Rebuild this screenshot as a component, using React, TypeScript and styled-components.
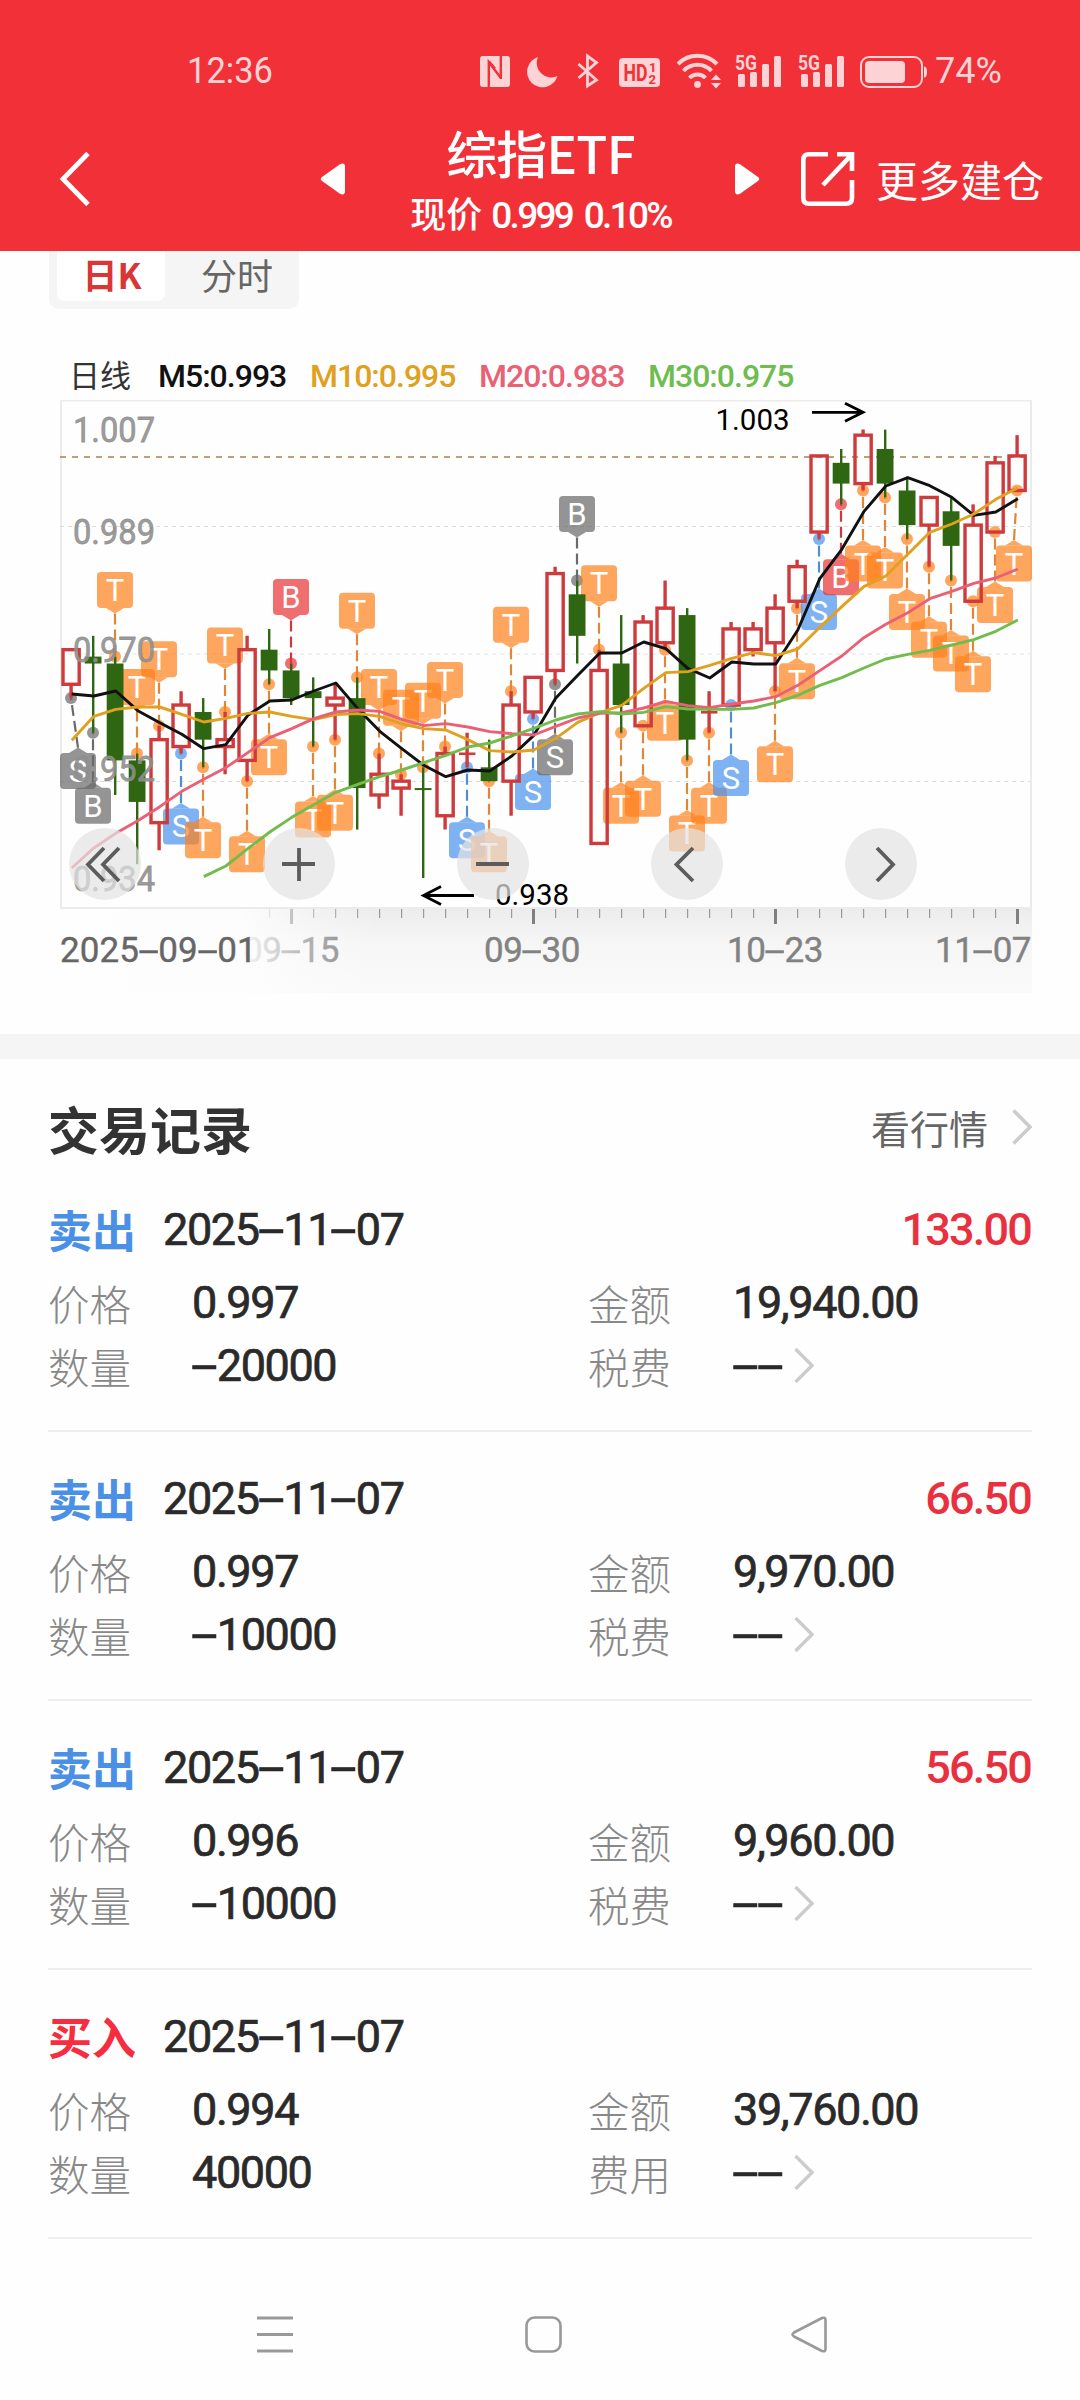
import React from 'react';
import styled, { createGlobalStyle } from 'styled-components';

const cjk = `"Noto Sans CJK SC", sans-serif`;
const digits = `Roboto, "Noto Sans CJK SC", sans-serif`;

const GlobalStyle = createGlobalStyle`
  * { box-sizing: border-box; }
  body { margin: 0; background: #fefefe; font-family: ${cjk}; }
  svg { display: block; flex: none; }
`;

const Screen = styled.div`
  width: 1080px;
  height: 2400px;
  display: flex;
  flex-direction: column;
  overflow: hidden;
  background: #fefefe;
`;

/* ---------- header ---------- */

const Header = styled.header`
  height: 251px;
  flex: none;
  background: #f23038;
  color: #fff;
`;

const StatusBar = styled.div`
  height: 107px;
  padding: 35px 0 0 187px;
  display: flex;
  align-items: center;
  color: #fdd3d5;
  font: 400 37.5px/1 ${digits};
`;

const StatusText = styled.span<{ $w: number; $sx: number }>`
  width: ${p => p.$w}px;
  white-space: nowrap;
  transform: scaleX(${p => p.$sx});
  transform-origin: left;
`;

const StatusIcon = styled.svg<{ $gap: number }>`
  height: 36px;
  margin-left: ${p => p.$gap}px;
`;

const TitleBar = styled.div`
  height: 144px;
  display: flex;
  align-items: center;
  padding-left: 58px;
`;

const TitleBlock = styled.div`
  width: 389px;
  padding-top: 3px;
  display: flex;
  flex-direction: column;
  align-items: center;
`;

const Title = styled.h1`
  margin: 0 0 7px;
  font: 500 51px/60px ${cjk};
  letter-spacing: -0.8px;
`;

const Quote = styled.div`
  display: flex;
  align-items: baseline;
  gap: 9px;
  font: 500 36px/46px ${cjk};
`;

const QuoteNumber = styled.span`
  font: 500 37px/46px ${digits};
  letter-spacing: -2.7px;
  word-spacing: 5px;
`;

const MoreLink = styled.span`
  margin: -1px 0 0 20px;
  font: 400 42px/60px ${cjk};
`;

const Spacer = styled.div<{ $w: number }>`
  width: ${p => p.$w}px;
  flex: none;
`;

/* ---------- chart ---------- */

const ChartSection = styled.section`
  height: 783px;
  flex: none;
  padding: 0 48px;
`;

const Tabs = styled.div`
  width: 250px;
  height: 58px;
  margin-left: 1px;
  padding: 0 8px 8px;
  display: flex;
  background: #f5f5f5;
  border-radius: 0 0 10px 10px;
`;

const Tab = styled.div<{ $active?: boolean }>`
  width: ${p => (p.$active ? 108 : 142)}px;
  flex: none;
  height: 50px;
  display: flex;
  justify-content: center;
  padding-left: 2px;
  border-radius: 0 0 8px 8px;
  background: ${p => (p.$active ? '#fff' : 'transparent')};
  color: ${p => (p.$active ? '#d93636' : '#666')};
  font: ${p => (p.$active ? '700 35px' : '400 36px')}/46px ${cjk};
`;

const Legend = styled.div`
  height: 50px;
  margin: 40px 0 1px 21px;
  display: flex;
  align-items: baseline;
  color: #333;
  font: 400 31px/50px ${cjk};
`;

const LegendItem = styled.span<{ $color: string; $w: number }>`
  width: ${p => p.$w}px;
  color: ${p => p.$color};
  font: 500 32px/50px ${digits};
  letter-spacing: -1px;
  white-space: nowrap;
`;

const ChartArea = styled.div`
  position: relative;
  width: 984px;
`;

const ChartControl = styled.button<{ $x: number }>`
  position: absolute;
  left: ${p => p.$x - 36 - 48}px;
  top: 428px;
  width: 72px;
  height: 72px;
  padding: 0;
  border: 0;
  border-radius: 50%;
  background: rgba(227, 227, 227, 0.71);
`;

const Axis = styled.div`
  position: relative;
  width: 972px;
  height: 84px;
  margin-left: 12px;
  background: linear-gradient(#ececec, #f6f6f6 40%, #fafafa);
`;

const AxisFade = styled.div`
  position: absolute;
  inset: 0;
  background: linear-gradient(to right, #fefefe 0, rgba(253, 253, 253, 0.97) 180px, rgba(253, 253, 253, 0.3) 260px, rgba(253, 253, 253, 0) 320px);
`;

const AxisLabel = styled.div<{ $left?: number; $right?: number; $dark?: boolean }>`
  position: absolute;
  top: 19px;
  ${p => (p.$right !== undefined ? `right: ${p.$right}px` : `left: ${p.$left}px`)};
  color: ${p => (p.$dark ? '#666' : '#828282')};
  font: 400 35px/46px ${digits};
  letter-spacing: ${p => (p.$dark ? 0.1 : -0.5)}px;
  -webkit-text-stroke: 0.4px currentColor;
  white-space: nowrap;
`;

const AxisTicks = styled.svg`
  position: absolute;
  left: 0;
  top: 0;
`;

const Divider = styled.div`
  height: 25px;
  flex: none;
  background: #f5f5f5;
`;

/* ---------- records ---------- */

const Records = styled.section`
  padding: 0 48px;
`;

const SectionHead = styled.div`
  height: 104px;
  padding-top: 35px;
  display: flex;
  align-items: center;
  justify-content: space-between;
`;

const SectionTitle = styled.h2`
  margin: -2px 0 0;
  color: #333;
  font: 700 51px/60px ${cjk};
`;

const SectionLink = styled.div`
  display: flex;
  align-items: center;
  gap: 24px;
  margin-top: -3px;
  color: #666;
  font: 400 39px/60px ${cjk};
`;

const Record = styled.article`
  height: 269px;
  padding-top: 33px;
  border-bottom: 2px solid #eee;
`;

const RecordHead = styled.div`
  height: 74px;
  display: flex;
  align-items: baseline;
`;

const Side = styled.span<{ $buy?: boolean }>`
  width: 115px;
  color: ${p => (p.$buy ? '#f52d3e' : '#4a90e6')};
  font: 700 44px/60px ${cjk};
  transform: translateY(3px);
`;

const Figure = styled.span<{ $red?: boolean }>`
  color: ${p => (p.$red ? '#e9303e' : '#2a2a2a')};
  font: ${p => (p.$red ? 500 : 400)} 45px/60px ${digits};
  letter-spacing: ${p => (p.$red ? -1.8 : -1.4)}px;
  -webkit-text-stroke: ${p => (p.$red ? 0 : 0.7)}px #2a2a2a;
  white-space: nowrap;
`;

const Profit = styled(Figure)`
  margin: 0 1px 0 auto;
`;

const Fields = styled.div`
  display: grid;
  grid-template-columns: 144px 396px 145px 1fr;
  grid-auto-rows: 63px;
  align-items: baseline;
`;

const FieldName = styled.span`
  color: #888;
  font: 300 41.5px/60px ${cjk};
  transform: translateY(3px);
`;

const FeeValue = styled.div`
  display: flex;
  align-items: baseline;
  gap: 11px;

  svg {
    transform: translateY(2.5px);
  }
`;

const DashGlyph = styled.span`
  display: inline-block;
  width: 0.55em;
  text-align: center;
  letter-spacing: 0;
  transform: scaleX(2.1);
`;

/* ---------- system navigation ---------- */

const NavBar = styled.nav`
  height: 132px;
  margin-top: auto;
  display: flex;
  align-items: center;
  padding-left: 257px;
`;

/** Numerals with the wide hyphen used all over the app. */
const Num = ({ children }: { children: string }) => (
  <>
    {children.split(/(-)/).map((part, i) => (part === '-' ? <DashGlyph key={i}>-</DashGlyph> : part))}
  </>
);

const Chevron = () => (
  <svg width="20" height="36" viewBox="0 0 20 36" fill="none" stroke="#ccc" strokeWidth="3.4">
    <path d="M1.5 1.5L18 18L1.5 34.5" />
  </svg>
);

const Signal = ({ gap }: { gap: number }) => (
  <StatusIcon $gap={gap} width="46" viewBox="0 0 46 36" fill="currentColor">
    <text x="0" y="16.5" fontFamily="Roboto" fontWeight="700" fontSize="21" textLength="22" lengthAdjust="spacingAndGlyphs">5G</text>
    <rect x="3" y="21" width="7" height="13" rx="1.5" />
    <rect x="15" y="19" width="7" height="15" rx="1.5" />
    <rect x="27" y="11" width="7" height="23" rx="1.5" />
    <rect x="39" y="3" width="7" height="31" rx="1.5" />
  </StatusIcon>
);

/* Each candle: [up day, high, body top, body bottom, low], in thousandths of a yuan. */
type Candle = [boolean, number, number, number, number];
const R = true;
const G = false;
const candles: Candle[] = [
  [R, 971, 971, 966, 964], [G, 973, 970, 969, 959], [G, 970, 969, 955, 950], [G, 956, 955, 949, 940],
  [R, 960, 958, 946, 942], [R, 965, 963, 957, 956], [G, 964, 962, 958, 954], [R, 962, 958, 957, 953],
  [R, 973, 971, 955, 952], [G, 974, 971, 968, 966], [G, 969, 968, 964, 963], [G, 967, 965, 964, 957],
  [R, 966, 964, 963, 958], [G, 967, 964, 951, 945], [R, 956, 953, 950, 948], [R, 953, 952, 951, 947],
  [G, 954, 951, 951, 938], [R, 957, 956, 947, 945], [R, 959, 956, 956, 954], [G, 958, 954, 952, 952],
  [R, 965, 963, 952, 947], [R, 967, 967, 962, 961], [R, 983, 982, 968, 966], [G, 981, 979, 973, 969],
  [R, 971, 968, 943, 943], [G, 976, 969, 963, 959], [R, 976, 975, 960, 960], [R, 981, 977, 972, 971],
  [G, 977, 976, 958, 955], [R, 965, 962, 962, 959], [R, 975, 974, 963, 963], [R, 975, 974, 971, 970],
  [R, 979, 977, 972, 965], [R, 984, 983, 978, 977], [R, 999, 999, 988, 987], [G, 1000, 998, 995, 992],
  [R, 1002.8, 1002, 995, 994], [G, 1002.8, 1000, 995, 993], [G, 996, 994, 989, 987], [R, 993, 993, 989, 983],
  [G, 993, 991, 986, 981], [R, 992, 989, 978, 978], [R, 999, 998, 988, 988], [R, 1002, 999, 994, 994],
];

/* Moving averages, in thirds of a pixel from the top of the drawing. */
const averages = [
  { color: '#111', from: 0, data: [1062, 1068, 1053, 1112, 1148, 1183, 1226, 1214, 1126, 1083, 1080, 1053, 1029, 1106, 1174, 1226, 1276, 1310, 1290, 1293, 1248, 1186, 1074, 1006, 939, 939, 906, 926, 985, 1014, 966, 972, 972, 870, 716, 628, 515, 438, 413, 437, 472, 526, 516, 476] },
  { color: '#e0a020', from: 0, data: [1201, 1129, 1108, 1101, 1101, 1123, 1146, 1135, 1120, 1116, 1129, 1139, 1124, 1121, 1129, 1152, 1166, 1170, 1199, 1232, 1236, 1230, 1195, 1147, 1118, 1096, 1045, 998, 995, 976, 955, 938, 947, 927, 862, 800, 740, 708, 643, 577, 552, 522, 478, 443] },
  { color: '#ea6075', from: 0, data: [1584, 1524, 1480, 1442, 1400, 1354, 1318, 1283, 1238, 1193, 1166, 1136, 1116, 1110, 1114, 1138, 1157, 1151, 1161, 1175, 1181, 1185, 1159, 1134, 1120, 1118, 1104, 1084, 1097, 1103, 1092, 1083, 1070, 1036, 992, 948, 893, 853, 818, 776, 754, 730, 714, 687] },
  { color: '#72bb4c', from: 6, data: [1610, 1578, 1526, 1476, 1432, 1394, 1357, 1333, 1310, 1290, 1268, 1246, 1221, 1209, 1188, 1165, 1140, 1122, 1115, 1122, 1117, 1100, 1107, 1108, 1108, 1104, 1088, 1066, 1036, 1013, 984, 957, 943, 931, 915, 899, 874, 840] },
];

const tones = {
  orange: { fill: 'rgba(255,128,25,.7)', line: '#e08638' },
  red: { fill: 'rgba(232,50,52,.7)', line: '#cc3a3e' },
  blue: { fill: 'rgba(72,145,236,.7)', line: '#4f8fd0' },
  grey: { fill: 'rgba(103,103,103,.7)', line: '#6a6a6a' },
};

/* Trade marks: candle index, letter, tone, and whether the mark hangs above the candle. */
type Mark = [number, string, keyof typeof tones, boolean];
const T = (i: number, above = false): Mark => [i, 'T', 'orange', above];
const marks: Mark[] = [
  [0, 'S', 'grey', false], [1, 'B', 'grey', false], T(2, true), T(3, true), T(4, true), [5, 'S', 'blue', false],
  T(6), T(7, true), T(8), T(9), [10, 'B', 'red', true], T(11), T(12), T(13, true), T(14, true), T(15, true),
  T(16, true), T(17, true), [18, 'S', 'blue', false], T(19), T(20, true), [21, 'S', 'blue', false],
  [22, 'S', 'grey', false], [23, 'B', 'grey', true], T(24, true), T(25), T(26), T(27), T(28), T(29),
  [30, 'S', 'blue', false], T(32), T(33), [34, 'S', 'blue', false], [35, 'B', 'red', false], T(36), T(37),
  T(38), T(39), T(40), T(41), T(42), T(43),
];

const cx = (i: number) => 71 + 22 * i;
const py = (price: number) => 109 + (1000 - price) * 6.92;

const CandleShape = ({ i }: { i: number }) => {
  const [up, high, top, bottom, low] = candles[i];
  const x = cx(i);
  const color = up ? '#cf3b3c' : '#2e6611';
  if (!up) {
    return (
      <g fill={color}>
        <rect x={x - 1} y={py(high)} width="2.4" height={py(low) - py(high)} />
        <rect x={x - 8.3} y={py(top)} width="16.8" height={Math.max(2, py(bottom) - py(top))} />
      </g>
    );
  }
  if (top === bottom) {
    return (
      <g fill={color}>
        <rect x={x - 1.6} y={py(high)} width="3.4" height={py(low) - py(high)} />
        <rect x={x - 8} y={py(top) - 1} width="16.4" height="2.6" />
      </g>
    );
  }
  return (
    <g stroke={color} fill="none" strokeWidth="3.4">
      <path d={`M${x + 0.1} ${py(high)}V${py(top)}M${x + 0.1} ${py(bottom)}V${py(low)}`} />
      <rect x={x - 8} y={py(top)} width="16.2" height={py(bottom) - py(top)} />
    </g>
  );
};

const MarkShape = ({ mark: [i, letter, tone, above] }: { mark: Mark }) => {
  const { fill, line } = tones[tone];
  const dot = py(above ? candles[i][1] : candles[i][4]);
  const x = Math.min(1014, Math.max(78, cx(i)));
  const top = above ? dot - 84.5 : dot + 55;
  const tip = above ? top + 41.5 : top - 5.5;
  const edge = above ? top + 36 : top;
  return (
    <g>
      <path d={`M${x} ${tip}L${cx(i)} ${dot}`} stroke={line} strokeWidth="2.2" strokeDasharray="11 5" />
      <circle cx={cx(i)} cy={dot} r="6" fill={fill} />
      <path d={`M${x - 9} ${edge}L${x} ${tip}L${x + 9} ${edge}Z`} fill={fill} />
      <rect x={x - 18} y={top} width="36" height="36" rx="4" fill={fill} />
      <text x={x} y={top + 29} textAnchor="middle" fill="#fff" fontFamily="Roboto" fontSize="31">{letter}</text>
    </g>
  );
};

const priceLabels: [string, number][] = [
  ['1.007', 101.5], ['0.989', 203.7], ['0.970', 321.7], ['0.952', 440.8], ['0.934', 550.6],
];

const KLine = () => (
  <svg width="984" height="509" viewBox="48 60 984 509">
    <rect x="61" y="60.5" width="970" height="507.5" fill="none" stroke="#ebebeb" strokeWidth="2" />
    <path d="M60 186.5H1030M60 441.5H1030" stroke="#dcdcdc" strokeDasharray="4 4" />
    <path d="M60 314H1030" stroke="#ebebeb" strokeWidth="1.6" strokeDasharray="4 4" />
    <path d="M60 117H1030" stroke="#bf9f76" strokeWidth="2" strokeDasharray="6 6" />
    {marks.map(m => <MarkShape key={m[0]} mark={m} />)}
    {candles.map((_, i) => <CandleShape key={i} i={i} />)}
    <g fill="#8f8f8f" fillOpacity="0.9" stroke="#8f8f8f" strokeWidth="0.8" strokeOpacity="0.9" fontFamily="Roboto" fontSize="35.5">
      {priceLabels.map(([label, y]) => (
        <text key={label} x="73" y={y} textLength="82" lengthAdjust="spacingAndGlyphs">{label}</text>
      ))}
    </g>
    {averages.map(a => (
      <polyline key={a.color} fill="none" stroke={a.color} strokeWidth="2.9" strokeLinejoin="round"
        points={a.data.map((v, k) => `${cx(a.from + k) + 0.8},${v / 3}`).join(' ')} />
    ))}
    <g stroke="#000" strokeWidth="2.8" fill="none">
      <path d="M812 72.3H863M845 63.3L863 72.3L845 81.3" />
      <path d="M474 555.5H424M441 546.5L423.5 555.5L441 564.5" />
    </g>
    <g fontFamily="Roboto" fontSize="29.5" fill="#000">
      <text x="715.5" y="89.8">1.003</text>
      <text x="495" y="564.7">0.938</text>
    </g>
  </svg>
);

const controls: [string, number, string][] = [
  ['oldest', 105, 'M35 20L19 36.5L35 53M50 20L34 36.5L50 53'],
  ['zoom in', 299, 'M19 36H52M36 20V53'],
  ['zoom out', 493, 'M19 36H52'],
  ['earlier', 687, 'M42 20L25.5 36.5L42 53'],
  ['later', 881, 'M32 20L48 36.5L32 53'],
];

const records = [
  { date: '2025-11-07', profit: '133.00', price: '0.997', amount: '19,940.00', qty: '-20000' },
  { date: '2025-11-07', profit: '66.50', price: '0.997', amount: '9,970.00', qty: '-10000' },
  { date: '2025-11-07', profit: '56.50', price: '0.996', amount: '9,960.00', qty: '-10000' },
  { buy: true, date: '2025-11-07', profit: '', price: '0.994', amount: '39,760.00', qty: '40000' },
];

export default function App() {
  return (
    <Screen>
      <GlobalStyle />
      <Header>
        <StatusBar>
          <StatusText $w={293} $sx={0.92}>12:36</StatusText>
          <StatusIcon $gap={0} width="30" viewBox="0 0 30 36">
            <rect x="0" y="3" width="30" height="31" rx="3" fill="currentColor" />
            <path d="M8.8 34V9L20.5 24.5" fill="none" stroke="#f23038" strokeWidth="2.4" />
            <path d="M9 8.500L15 15.5M20.8 3V26" fill="none" stroke="#f23038" strokeWidth="2.4" />
          </StatusIcon>
          <StatusIcon $gap={17} width="31" viewBox="0 0 31 36" fill="currentColor">
            <path d="M11 4A15.5 15.5 0 1 0 30.5 23A14.5 14.5 0 0 1 11 4Z" />
          </StatusIcon>
          <StatusIcon $gap={19} width="22" viewBox="0 0 22 36" fill="none" stroke="currentColor" strokeWidth="2.8">
            <path d="M1.5 11L19.5 27L10.5 33V3L19.5 9.5L1.5 25" />
          </StatusIcon>
          <StatusIcon $gap={20} width="41" viewBox="0 0 41 36">
            <rect x="0" y="5" width="41" height="29" rx="4" fill="currentColor" />
            <g fill="#f23038" fontFamily="Roboto" fontWeight="700">
              <text x="4.5" y="28" fontSize="23" textLength="24" lengthAdjust="spacingAndGlyphs">HD</text>
              <text x="30" y="18.5" fontSize="13">1</text>
              <text x="29.5" y="31" fontSize="13">2</text>
            </g>
          </StatusIcon>
          <StatusIcon $gap={17} width="45" viewBox="0 0 45 36" fill="none" stroke="currentColor" strokeWidth="4">
            <path d="M1 11A27 27 0 0 1 40 11M6.5 18A19 19 0 0 1 34.5 18M12.5 25A11 11 0 0 1 28.5 25" />
            <circle cx="20.5" cy="31.5" r="3.4" fill="currentColor" stroke="none" />
            <path d="M34 27L39 21.5L44 27ZM34 30L39 35.5L44 30Z" fill="currentColor" stroke="none" />
          </StatusIcon>
          <Signal gap={13} />
          <Signal gap={17} />
          <StatusIcon $gap={16} width="68" viewBox="0 0 68 36">
            <rect x="1" y="4" width="61" height="30" rx="8" fill="none" stroke="currentColor" strokeWidth="2" />
            <rect x="5" y="8" width="40" height="22" rx="4" fill="currentColor" />
            <path d="M64 13.5Q67 13.5 67 19T64 24.5Z" fill="currentColor" />
          </StatusIcon>
          <Spacer $w={7} />
          <StatusText $w={66} $sx={0.96}>74%</StatusText>
        </StatusBar>
        <TitleBar>
          <svg width="34" height="58" viewBox="0 0 34 58" fill="none" stroke="#fff" strokeWidth="4.8">
            <path d="M30 3.5L5 29L30 54.5" />
          </svg>
          <Spacer $w={228} />
          <svg width="26" height="32" viewBox="0 0 26 32" fill="#fff">
            <path d="M2 14L20 1.2Q25 -1 25 4V28Q25 33 20 30.8L2 18Q-0.5 16 2 14Z" />
          </svg>
          <TitleBlock>
            <Title>综指ETF</Title>
            <Quote>现价 <QuoteNumber>0.999 0.10%</QuoteNumber></Quote>
          </TitleBlock>
          <svg width="26" height="32" viewBox="0 0 26 32" fill="#fff">
            <path d="M23 14L5 1.2Q0 -1 0 4V28Q0 33 5 30.8L23 18Q25.5 16 23 14Z" />
          </svg>
          <Spacer $w={39} />
          <svg width="56" height="56" viewBox="0 0 56 56" fill="none" stroke="#fff" strokeWidth="4.6">
            <path d="M28 3.3H9Q3.3 3.3 3.3 9V47Q3.3 52.7 9 52.7H46Q52 52.7 52 47V29" />
            <path d="M37 3.3H52V20M52 3.3L23 34" />
          </svg>
          <MoreLink>更多建仓</MoreLink>
        </TitleBar>
      </Header>

      <ChartSection>
        <Tabs>
          <Tab $active>日K</Tab>
          <Tab>分时</Tab>
        </Tabs>
        <Legend>
          日线
          <Spacer $w={27} />
          <LegendItem $color="#111" $w={152}>M5:0.993</LegendItem>
          <LegendItem $color="#e0a020" $w={169}>M10:0.995</LegendItem>
          <LegendItem $color="#ea6075" $w={169}>M20:0.983</LegendItem>
          <LegendItem $color="#6fbd4e" $w={160}>M30:0.975</LegendItem>
        </Legend>
        <ChartArea>
          <KLine />
          {controls.map(([name, x, d]) => (
            <ChartControl key={name} $x={x} aria-label={name}>
              <svg width="72" height="72" viewBox="0 0 72 72" fill="none" stroke="#5c5c5c" strokeWidth="3.8">
                <path d={d} />
              </svg>
            </ChartControl>
          ))}
        </ChartArea>
        <Axis>
          <AxisTicks width="972" height="16" viewBox="60 0 972 16">
            {candles.map((_, i) => {
              if (i < 9) return null;
              const major = i % 11 === 10;
              return <rect key={i} x={cx(i) - (major ? 1 : 0)} y="0" width={major ? 3 : 1.2} height={major ? 15 : 9} fill={major ? '#808080' : '#999'} />;
            })}
          </AxisTicks>
          <AxisLabel $left={183}><Num>09-15</Num></AxisLabel>
          <AxisLabel $left={424}><Num>09-30</Num></AxisLabel>
          <AxisLabel $left={667}><Num>10-23</Num></AxisLabel>
          <AxisLabel $right={1}><Num>11-07</Num></AxisLabel>
          <AxisFade />
          <AxisLabel $left={0} $dark><Num>2025-09-01</Num></AxisLabel>
        </Axis>
      </ChartSection>

      <Divider />

      <Records>
        <SectionHead>
          <SectionTitle>交易记录</SectionTitle>
          <SectionLink>看行情 <Chevron /></SectionLink>
        </SectionHead>
        {records.map((r, i) => (
          <Record key={i}>
            <RecordHead>
              <Side $buy={r.buy}>{r.buy ? '买入' : '卖出'}</Side>
              <Figure><Num>{r.date}</Num></Figure>
              <Profit $red>{r.profit}</Profit>
            </RecordHead>
            <Fields>
              <FieldName>价格</FieldName>
              <Figure>{r.price}</Figure>
              <FieldName>金额</FieldName>
              <Figure>{r.amount}</Figure>
              <FieldName>数量</FieldName>
              <Figure><Num>{r.qty}</Num></Figure>
              <FieldName>{r.buy ? '费用' : '税费'}</FieldName>
              <FeeValue>
                <Figure><Num>--</Num></Figure>
                <Chevron />
              </FeeValue>
            </Fields>
          </Record>
        ))}
      </Records>

      <NavBar>
        <svg width="37" height="37" viewBox="0 0 37 37" stroke="#999" strokeWidth="3">
          <path d="M0 2H36M0 18.5H36M0 35H36" />
        </svg>
        <Spacer $w={231} />
        <svg width="37" height="37" viewBox="0 0 37 37" fill="none" stroke="#999" strokeWidth="2.6">
          <rect x="1.5" y="1.5" width="34" height="34" rx="8" />
        </svg>
        <Spacer $w={229} />
        <svg width="37" height="37" viewBox="0 0 37 37" fill="none" stroke="#999" strokeWidth="2.6" strokeLinejoin="round">
          <path d="M3 16.5L31 2Q34.5 1 34.5 4V33Q34.5 36 31 35L3 20.5Q0 18.5 3 16.5Z" />
        </svg>
      </NavBar>
    </Screen>
  );
}
